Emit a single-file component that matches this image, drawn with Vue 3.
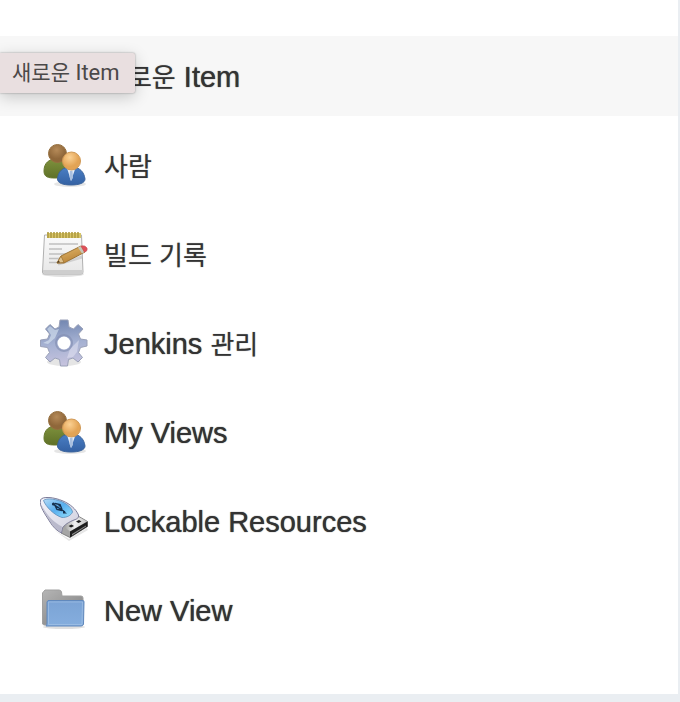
<template>
  <div class="side-panel">
    <nav class="tasks">
      <a
        v-for="task in tasks"
        :key="task.id"
        href="#"
        class="task"
        :class="{ active: task.id === hovered }"
        @mouseenter="hovered = task.id"
        @click.prevent
      >
        <svg v-if="task.icon === 'package'" class="task-icon" viewBox="0 0 48 48" aria-hidden="true">
          <path d="M8 14 L24 8 L40 14 L40 33 L24 40 L8 33 Z" fill="#d9a860" stroke="#9c7136" />
          <path d="M8 14 L24 20 L40 14 M24 20 V40" fill="none" stroke="#9c7136" />
        </svg>

        <svg v-else-if="task.icon === 'people'" class="task-icon" viewBox="0 0 48 48" aria-hidden="true">
          <ellipse cx="30" cy="43" rx="16" ry="3" fill="#000" opacity="0.1" />
          <path d="M4 30 C4 22 9 18 16 18 C23 18 27 23 27 31 C27 36 22 37 15 37 C8 37 4 36 4 30 Z" fill="url(#green-body)" stroke="#66772d" />
          <circle cx="17.5" cy="12.5" r="9" fill="url(#brown-head)" stroke="#96703f" />
          <path d="M17.5 38 C18 31 22 26 31 26 C40 26 44 31 45 38 C45 42 39 44 31 44 C23 44 17.5 42 17.5 38 Z" fill="url(#blue-body)" stroke="#3d659d" />
          <path d="M27 27 L31 40 L35.5 27 Z" fill="#e8eff8" />
          <path d="M30 30 L32.5 30 L33 37 L31 40 L29.5 36 Z" fill="#a9c0df" />
          <circle cx="31.5" cy="20" r="9" fill="url(#light-head)" stroke="#cf9855" />
        </svg>

        <svg v-else-if="task.icon === 'notepad'" class="task-icon" viewBox="0 0 48 48" aria-hidden="true">
          <ellipse cx="23" cy="44" rx="21" ry="3" fill="#000" opacity="0.12" />
          <path d="M4.5 5 H41.5 L43 42 Q43 44 41 44 H4.5 Q2.5 44 2.5 42 Z" fill="url(#paper)" stroke="#b0b0b0" />
          <path d="M3 40 H43 V42 Q43 44 41 44 H4.5 Q3 44 3 42 Z" fill="#cecece" />
          <rect x="7" y="3" width="34" height="5" fill="#d8c568" />
          <path d="M8 2 V8 M11 2 V8 M14 2 V8 M17 2 V8 M20 2 V8 M23 2 V8 M26 2 V8 M29 2 V8 M32 2 V8 M35 2 V8 M38 2 V8" stroke="#b09b42" stroke-width="1.6" />
          <path d="M9 14 H38 M9 19 H22 M9 24 H28 M9 28.5 H22 M9 32.5 H19" stroke="#c0c0c0" stroke-width="1.5" />
          <path d="M18 34 L42 27" stroke="#000" stroke-width="3" opacity="0.12" />
          <path d="M17 33 L21 26 L41 16 L45 22 L24 33 Z" fill="url(#pencil)" stroke="#9d7435" />
          <path d="M17 33 L21 26 L24 32.5 Z" fill="#dfc18c" stroke="#9d7435" stroke-width="0.8" />
          <path d="M17 33 L18.5 30.5 L20 32.3 Z" fill="#4c3b25" />
          <path d="M38 17.5 L41 16 L44.5 22 L42 23.5 Z" fill="#c6c6b8" />
          <path d="M41 16 Q45 15 47 18 Q48 21 44.5 22.3 Z" fill="#e2505a" stroke="#c65555" stroke-width="0.7" />
        </svg>

        <svg v-else-if="task.icon === 'gear'" class="task-icon" viewBox="0 0 48 48" aria-hidden="true">
          <ellipse cx="24" cy="43" rx="17" ry="4" fill="#000" opacity="0.1" />
          <path
            d="M20 1 H28 L29 8 L33.5 10 L38 5.5 L43 10 L38.5 15 L40.5 20 L47 21 V27 L40.5 28.5 L38.5 33.5 L42.5 38.5 L38 43 L33 39 L28.5 40.5 L27.5 47 H20.5 L19.5 40.5 L15 39 L10 43 L5.5 38.5 L9.5 33.5 L7.5 28.5 L0.5 27.5 V21 L7.5 20 L9.5 15 L5.5 10 L10 5.5 L15 10 L19 8 Z"
            fill="url(#gear-fill)"
            stroke="#9aa1b8"
            stroke-linejoin="round"
          />
          <path d="M10 7 L15 11 L19 10 L15 19 L8 25 L3 24 L9 21 L11 16 L7 10 Z" fill="#dce7f4" opacity="0.6" />
          <path d="M39 21 L30 30 L27 39 L33 38 L37 33 Z" fill="#e8e8f6" opacity="0.5" />
          <circle cx="24" cy="24" r="8" fill="none" stroke="#8490b3" stroke-width="2" opacity="0.7" />
          <circle cx="24" cy="24" r="6.5" fill="#fff" />
        </svg>

        <svg v-else-if="task.icon === 'usb'" class="task-icon" viewBox="0 0 48 48" aria-hidden="true">
          <path d="M14 33 L29 42 L47 31 L48 33 L29 44 Z" fill="#000" opacity="0.1" />
          <path d="M22 28 L38 19 L47.5 24.5 V29.5 L30 40.5 L21 36 Z" fill="#a5a5a5" stroke="#6b6b6b" stroke-width="0.8" />
          <path d="M22.5 28.5 L38 19.5 L47 24.5 L30 34.5 Z" fill="url(#metal)" />
          <path d="M30 34.5 L47.5 24.5 V29.5 L30 40.5 Z" fill="#1c1c1c" />
          <path d="M32 37 L46 28.5 V29.5 L32 38.5 Z" fill="#8a8a8a" />
          <path d="M36 24.5 L39 23 L41.5 24.5 L38.5 26 Z M28.5 29 L31.5 27.5 L34 29 L31 30.5 Z" fill="#1c1c1c" />
          <path d="M0.5 3 C2 -1 14 0 23 4 C30 7 36 12 38.5 18 C39 21 37 22 34 23 C29 25 24 28 22.5 31 L21.5 36 C17 34 13 30 10 25 C5 17 -1 9 0.5 3 Z" fill="url(#usb-shell)" stroke="#7c7c99" />
          <path d="M1.5 8 C6 17 13 25 22 29.5 L21 35.5 C17 33.5 13 29 10.5 25 C6 18 2 12 1.5 8 Z" fill="#a9a9bf" opacity="0.7" />
          <path d="M3.5 3.5 C6 0.5 18 2 24.5 6 C29 8.500 32 12 32.5 15 C31 18.500 27 20.5 22 20.5 C14 18 6 10 3.5 3.5 Z" fill="url(#usb-label)" stroke="#5b8ab9" stroke-width="0.8" />
          <path d="M13 7 L25 15 M15 6.500 L20 7.500 L22 12.500 M15 8.500 L17 12.500 L22 13.500" fill="none" stroke="#16314f" stroke-width="1.4" />
          <circle cx="13.5" cy="7" r="1.6" fill="#16314f" />
          <path d="M23 13.500 L27 16.500 L23 16.500 Z M18 7 L21 8 L19 10 Z" fill="#16314f" />
        </svg>

        <svg v-else class="task-icon" viewBox="0 0 48 48" aria-hidden="true">
          <ellipse cx="24" cy="41" rx="21" ry="2" fill="#000" opacity="0.12" />
          <path d="M2.5 38 V7 L5 4 H19 Q21 4 21.5 6 L22 10 H41 Q43 10 43 12 V39 H4 Z" fill="url(#folder-back)" stroke="#a0a0a0" />
          <path d="M8 14.5 H43 Q44 14.5 44 16 L43.5 38 Q43 40 41 40 H6 Q7 39 7 37 V16 Z" fill="url(#folder-front)" stroke="#6189bd" />
          <path d="M8.5 16 H42.5 L42 38.5 H8.5 Z" fill="none" stroke="#a9c7e8" opacity="0.6" />
        </svg>

        <span class="task-label">
          <template v-for="(part, i) in task.label" :key="i">
            <span v-if="part.ko" lang="ko" class="hangul">{{ part.ko }}</span>
            <template v-else>{{ part.en }}</template>
          </template>
        </span>
      </a>
    </nav>
    <div class="tooltip" role="tooltip"><span lang="ko" class="hangul">새로운</span> Item</div>

    <!-- 아이콘 그라디언트 -->
    <svg class="defs" width="0" height="0" aria-hidden="true">
      <defs>
        <radialGradient id="brown-head" cx="0.45" cy="0.3">
          <stop offset="0" stop-color="#b58a58" />
          <stop offset="1" stop-color="#8f673a" />
        </radialGradient>
        <radialGradient id="light-head" cx="0.4" cy="0.3">
          <stop offset="0" stop-color="#fbd193" />
          <stop offset="1" stop-color="#e3a455" />
        </radialGradient>
        <linearGradient id="green-body" x1="0" y1="0" x2="0" y2="1">
          <stop offset="0" stop-color="#7e913d" />
          <stop offset="1" stop-color="#5f7128" />
        </linearGradient>
        <linearGradient id="blue-body" x1="0" y1="0" x2="0" y2="1">
          <stop offset="0" stop-color="#4a7fc5" />
          <stop offset="1" stop-color="#3461a3" />
        </linearGradient>
        <linearGradient id="paper" x1="0" y1="0" x2="0" y2="1">
          <stop offset="0" stop-color="#fafafa" />
          <stop offset="1" stop-color="#e7e7e7" />
        </linearGradient>
        <linearGradient id="pencil" x1="0" y1="0" x2="0.5" y2="1">
          <stop offset="0" stop-color="#e6bd70" />
          <stop offset="1" stop-color="#b98337" />
        </linearGradient>
        <linearGradient id="gear-fill" x1="0.5" y1="0" x2="0.6" y2="1">
          <stop offset="0" stop-color="#7387b1" />
          <stop offset="0.5" stop-color="#a5b1d2" />
          <stop offset="1" stop-color="#c8c4df" />
        </linearGradient>
        <linearGradient id="metal" x1="0" y1="0" x2="1" y2="0">
          <stop offset="0" stop-color="#8f8f8f" />
          <stop offset="0.5" stop-color="#f1f1f1" />
          <stop offset="1" stop-color="#c4c4c4" />
        </linearGradient>
        <linearGradient id="usb-shell" x1="0" y1="0" x2="1" y2="1">
          <stop offset="0" stop-color="#f4f4fb" />
          <stop offset="1" stop-color="#cfcfdd" />
        </linearGradient>
        <linearGradient id="usb-label" x1="0" y1="0" x2="1" y2="1">
          <stop offset="0" stop-color="#b5dcf8" />
          <stop offset="0.5" stop-color="#58aeee" />
          <stop offset="1" stop-color="#94e0fc" />
        </linearGradient>
        <linearGradient id="folder-back" x1="0" y1="0" x2="0.8" y2="1">
          <stop offset="0" stop-color="#b5b5b5" />
          <stop offset="1" stop-color="#808080" />
        </linearGradient>
        <linearGradient id="folder-front" x1="0" y1="0" x2="0" y2="1">
          <stop offset="0" stop-color="#7ba3d5" />
          <stop offset="1" stop-color="#85aede" />
        </linearGradient>
      </defs>
    </svg>
  </div>
</template>

<script setup>
import { ref } from 'vue'

// 마우스가 올라간 메뉴
const hovered = ref('new-item')

const tasks = [
  { id: 'new-item', icon: 'package', label: [{ ko: '새로운' }, { en: ' Item' }] },
  { id: 'people', icon: 'people', label: [{ ko: '사람' }] },
  { id: 'builds', icon: 'notepad', label: [{ ko: '빌드 기록' }] },
  { id: 'manage', icon: 'gear', label: [{ en: 'Jenkins ' }, { ko: '관리' }] },
  { id: 'my-views', icon: 'people', label: [{ en: 'My Views' }] },
  { id: 'lockable', icon: 'usb', label: [{ en: 'Lockable Resources' }] },
  { id: 'new-view', icon: 'folder', label: [{ en: 'New View' }] }
]
</script>

<style>
body {
  margin: 0;
  background-color: #eaeef2;
}
</style>

<style scoped>
.side-panel {
  position: relative;
  margin-right: 2px;
  padding: 36px 0 44px;
  background-color: #ffffff;
  font-family: "Liberation Sans", "Noto Sans CJK KR", sans-serif;
}

.tasks {
  display: flex;
  flex-direction: column;
  gap: 9px;
}

.task {
  display: flex;
  align-items: center;
  gap: 16px;
  height: 80px;
  padding: 0 40px;
  color: #333333;
  text-decoration: none;
}

.task.active {
  background-color: #f7f7f7;
}

.task-icon {
  flex: none;
  width: 48px;
  height: 48px;
}

.task-label {
  padding-top: 1px;
  font-size: 29px;
  line-height: 40px;
  white-space: pre;
  text-shadow: 0 0 1px #333333;
}

.task-label .hangul {
  font-size: 26px;
  line-height: 1;
  text-shadow: 0 0 1px rgba(51, 51, 51, 0.5);
}

.tooltip {
  position: absolute;
  top: 53px;
  left: 0;
  padding: 0 15px 0 12px;
  background-color: #e9dfe0;
  border-radius: 0 2px 2px 0;
  box-shadow: 0 0 2px rgba(0, 0, 0, 0.4), 0 4px 16px rgba(0, 0, 0, 0.2);
  color: #4b4848;
  font-family: Roboto, "Noto Sans CJK KR", sans-serif;
  font-size: 22px;
  line-height: 40px;
  white-space: nowrap;
}

.tooltip .hangul {
  font-size: 21px;
  line-height: 1;
}

.defs {
  position: absolute;
}
</style>
